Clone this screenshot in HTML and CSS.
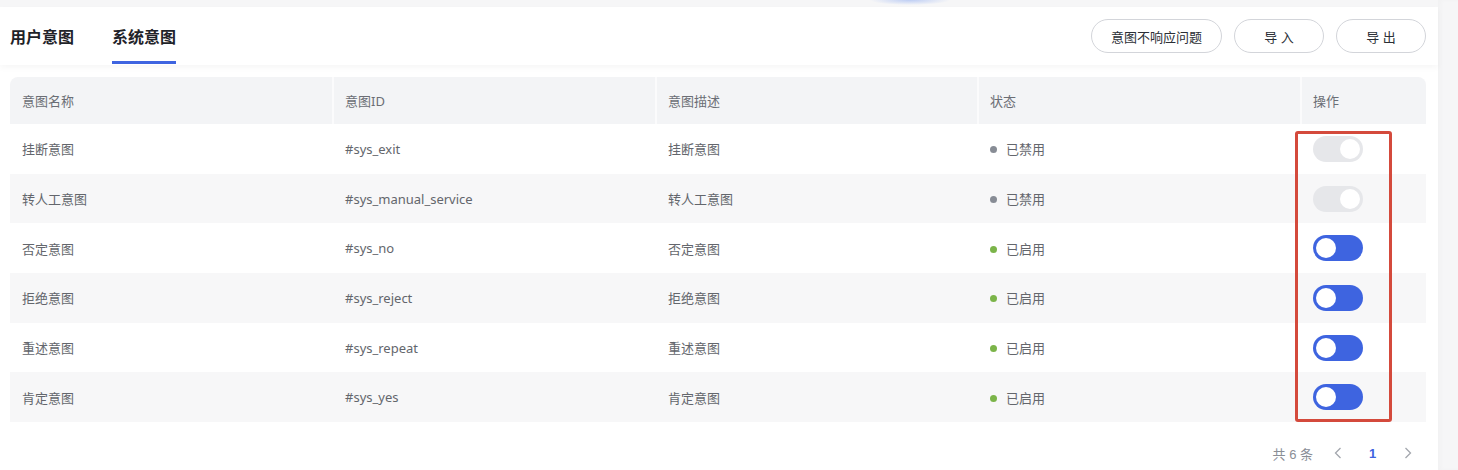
FILE: index.html
```html
<!DOCTYPE html>
<html lang="zh-CN">

<head>
    <meta charset="UTF-8">
    <meta name="viewport" content="width=device-width, initial-scale=1.0">
    <title>系统意图</title>
    <link rel="stylesheet" href="styles.css">
</head>

<body>

    <div class="page">
        <div class="topbar"></div>

        <div class="header">
            <div class="tabs">
                <div class="tab">用户意图</div>
                <div class="tab active">系统意图</div>
            </div>
            <div class="actions">
                <button class="btn btn-wide">意图不响应问题</button>
                <button class="btn">导 入</button>
                <button class="btn">导 出</button>
            </div>
        </div>

        <div class="content">
            <table class="intent-table">
                <thead>
                    <tr>
                        <th>意图名称</th>
                        <th>意图ID</th>
                        <th>意图描述</th>
                        <th>状态</th>
                        <th>操作</th>
                    </tr>
                </thead>
                <tbody>
                    <tr>
                        <td>挂断意图</td>
                        <td>#sys_exit</td>
                        <td>挂断意图</td>
                        <td><span class="dot off"></span>已禁用</td>
                        <td><span class="switch disabled"><span class="knob"></span></span></td>
                    </tr>
                    <tr>
                        <td>转人工意图</td>
                        <td>#sys_manual_service</td>
                        <td>转人工意图</td>
                        <td><span class="dot off"></span>已禁用</td>
                        <td><span class="switch disabled"><span class="knob"></span></span></td>
                    </tr>
                    <tr>
                        <td>否定意图</td>
                        <td>#sys_no</td>
                        <td>否定意图</td>
                        <td><span class="dot on"></span>已启用</td>
                        <td><span class="switch"><span class="knob"></span></span></td>
                    </tr>
                    <tr>
                        <td>拒绝意图</td>
                        <td>#sys_reject</td>
                        <td>拒绝意图</td>
                        <td><span class="dot on"></span>已启用</td>
                        <td><span class="switch"><span class="knob"></span></span></td>
                    </tr>
                    <tr>
                        <td>重述意图</td>
                        <td>#sys_repeat</td>
                        <td>重述意图</td>
                        <td><span class="dot on"></span>已启用</td>
                        <td><span class="switch"><span class="knob"></span></span></td>
                    </tr>
                    <tr>
                        <td>肯定意图</td>
                        <td>#sys_yes</td>
                        <td>肯定意图</td>
                        <td><span class="dot on"></span>已启用</td>
                        <td><span class="switch"><span class="knob"></span></span></td>
                    </tr>
                </tbody>
            </table>

            <!-- annotation box around the switches -->
            <div class="highlight"></div>

            <div class="pager">
                <span class="total">共 6 条</span>
                <span class="pager-btn">
                    <svg width="8" height="12" viewBox="0 0 8 12"><path d="M6.5 1 L1.5 6 L6.5 11" fill="none" stroke="#a3a7ae" stroke-width="1.3"/></svg>
                </span>
                <span class="pager-btn current">1</span>
                <span class="pager-btn">
                    <svg width="8" height="12" viewBox="0 0 8 12"><path d="M1.5 1 L6.5 6 L1.5 11" fill="none" stroke="#a3a7ae" stroke-width="1.3"/></svg>
                </span>
            </div>
        </div>
    </div>

    <div class="side"></div>

</body>

</html>
```

FILE: styles.css
```css
body {
    margin: 0;
    padding: 0;
    display: flex;
    height: 470px;
    overflow: hidden;
    background: #f6f6f7;
    font-family: "Liberation Sans", "Noto Sans CJK SC", sans-serif;
    color: #63666c;
}

.page {
    width: 1438px;
    background: #fff;
    display: flex;
    flex-direction: column;
}

.side {
    flex: 1;
    background: #f6f6f7;
    box-shadow: inset 3px 0 4px rgba(0, 0, 0, 0.02);
}

.topbar {
    height: 7px;
    background:
        radial-gradient(ellipse 40px 5px at 910px 0, rgba(120, 155, 240, 0.45), rgba(120, 155, 240, 0) 100%),
        #f6f6f7;
}

/* header with tabs + buttons */
.header {
    height: 58px;
    display: flex;
    justify-content: space-between;
    align-items: stretch;
    padding: 0 12px 0 10px;
    box-shadow: 0 3px 6px rgba(0, 0, 0, 0.035);
    position: relative;
    z-index: 1;
}

.tabs {
    display: flex;
    gap: 38px;
}

.tab {
    display: flex;
    align-items: center;
    padding-top: 4px;
    border-bottom: 3px solid transparent;
    margin-bottom: 1px;
    font-size: 16px;
    font-weight: bold;
    color: #1f2329;
    box-sizing: border-box;
}

.tab.active {
    border-bottom-color: #3e64e0;
}

.actions {
    display: flex;
    align-items: center;
    gap: 12px;
}

.btn {
    height: 34px;
    width: 90px;
    border: 1px solid #d3d5da;
    border-radius: 17px;
    background: #fff;
    font-family: "Liberation Sans", "Noto Sans CJK SC", sans-serif;
    font-size: 13px;
    color: #2b2f36;
    padding: 0;
}

.btn-wide {
    width: 131px;
}

/* table */
.content {
    position: relative;
    padding: 12px 12px 0 10px;
}

.intent-table {
    width: 1416px;
    border-collapse: separate;
    border-spacing: 0;
    table-layout: fixed;
    font-family: "Noto Sans", "Noto Sans CJK SC", sans-serif;
    font-size: 13px;
}

.intent-table th,
.intent-table td {
    box-sizing: border-box;
}

.intent-table th:nth-child(1) { width: 322px; }
.intent-table th:nth-child(2) { width: 323px; }
.intent-table th:nth-child(3) { width: 322px; }
.intent-table th:nth-child(4) { width: 323px; }

.intent-table th {
    height: 47px;
    background: #f3f4f6;
    text-align: left;
    font-weight: normal;
    color: #6b6e75;
    padding: 0 12px;
    border-left: 2px solid #fbfbfc;
}

.intent-table th:first-child {
    border-left: none;
    border-top-left-radius: 8px;
}

.intent-table th:last-child {
    border-top-right-radius: 8px;
}

.intent-table td {
    height: 49.7px;
    padding: 0 12px;
    color: #63666c;
    white-space: nowrap;
}

.intent-table th + th {
    padding-left: 11px;
}

.intent-table td + td {
    padding-left: 13px;
}

.intent-table tbody tr:nth-child(even) td {
    background: #f7f7f8;
}

.dot {
    display: inline-block;
    width: 7px;
    height: 7px;
    border-radius: 50%;
    margin-right: 9px;
    vertical-align: 1px;
}

.dot.off {
    background: #878c95;
}

.dot.on {
    background: #7bb449;
}

/* switch */
.switch {
    display: flex;
    align-items: center;
    width: 50px;
    height: 26px;
    border-radius: 13px;
    background: #3e64e0;
    padding: 0 3px;
    box-sizing: border-box;
}

.switch .knob {
    width: 20px;
    height: 20px;
    border-radius: 50%;
    background: #fff;
}

.switch.disabled {
    background: #e6e7ea;
    justify-content: flex-end;
}

.highlight {
    position: absolute;
    left: 1295px;
    top: 66px;
    width: 97px;
    height: 291px;
    border: 3px solid #d44a3c;
    border-radius: 3px;
    box-sizing: border-box;
}

/* pagination */
.pager {
    display: flex;
    justify-content: flex-end;
    align-items: center;
    height: 22px;
    margin-top: 20px;
    padding-right: 1px;
    font-size: 13px;
    color: #8a8e96;
}

.total {
    margin-right: 7px;
}

.pager-btn {
    width: 35px;
    display: flex;
    justify-content: center;
    align-items: center;
}

.pager-btn.current {
    color: #3e64e0;
    font-weight: bold;
}
```
